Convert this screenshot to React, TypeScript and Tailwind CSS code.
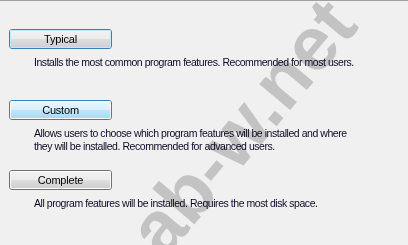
const font = { fontFamily: '"Liberation Sans", Arial, sans-serif' };

type Variant = 'default' | 'hot' | 'normal';

function SetupButton({ label, variant }: { label: string; variant: Variant }) {
  const shell =
    variant === 'normal'
      ? 'border-[#707070]'
      : 'border-[#3c7fb1]';
  const top =
    variant === 'hot'
      ? 'bg-gradient-to-b from-[#eaf6fd] to-[#d9f0fc]'
      : 'bg-gradient-to-b from-[#f2f2f2] to-[#ebebeb]';
  const bottom =
    variant === 'hot'
      ? 'bg-gradient-to-b from-[#bee6fd] to-[#a7d9f5]'
      : 'bg-gradient-to-b from-[#dddddd] to-[#cfcfcf]';
  const inner =
    variant === 'default'
      ? 'shadow-[inset_0_0_0_1px_#bfe8fa]'
      : 'shadow-[inset_0_0_0_1px_#fcfcfc]';

  return (
    <div
      className={`relative w-[103px] h-[20px] rounded-[3px] border ${shell} overflow-hidden flex flex-col`}
    >
      <div className={`h-1/2 ${top}`} />
      <div className={`h-1/2 ${bottom}`} />
      <div className={`absolute inset-0 rounded-[2px] ${inner}`} />
      <span
        className="absolute inset-0 flex items-center justify-center text-[11px] tracking-[-0.2px] text-black leading-none"
        style={font}
      >
        {label}
      </span>
    </div>
  );
}

function Description({ children }: { children: React.ReactNode }) {
  return (
    <p
      className="ml-[25px] mt-[7px] text-[10.5px] tracking-[-0.45px] leading-[13px] text-[#0b0b26] whitespace-nowrap"
      style={font}
    >
      {children}
    </p>
  );
}

export default function App() {
  return (
    <div className="relative w-[408px] h-[245px] overflow-hidden bg-[#f0f0f0] border-t border-[#a0a0a0]">
      <div className="pl-[9px] pt-[28px] flex flex-col">
        <SetupButton label="Typical" variant="default" />
        <Description>Installs the most common program features. Recommended for most users.</Description>

        <div className="mt-[31px]">
          <SetupButton label="Custom" variant="hot" />
        </div>
        <Description>
          Allows users to choose which program features will be installed and where
          <br />
          they will be installed. Recommended for advanced users.
        </Description>

        <div className="mt-[17px]">
          <SetupButton label="Complete" variant="normal" />
        </div>
        <Description>All program features will be installed. Requires the most disk space.</Description>
      </div>

      {/* watermark */}
      <div
        className="absolute left-[242px] top-[126px] -translate-x-1/2 -translate-y-1/2 -rotate-[50deg] pointer-events-none whitespace-nowrap text-[76px] font-bold leading-none text-[#d0d0d0] mix-blend-multiply"
        style={font}
      >
        ab-w.net
      </div>
    </div>
  );
}
